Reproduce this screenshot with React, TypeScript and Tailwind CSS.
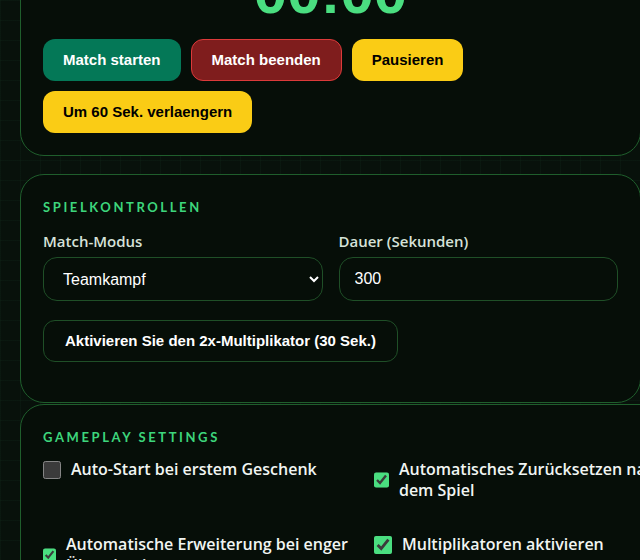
import { useState } from "react"

const headingFont = "font-['Century_Gothic','Lato','Open_Sans',sans-serif]"
const labelFont = "font-['Century_Gothic','Open_Sans','Lato',sans-serif]"
const bodyFont = "font-['Liberation_Sans',Arial,sans-serif]"

function SectionTitle({ children }: { children: string }) {
  return (
    <h2 className={`${headingFont} text-[13px] font-bold uppercase leading-[20px] tracking-[0.2em] text-[#3dd67c]`}>
      {children}
    </h2>
  )
}

function Toggle({ label, defaultChecked }: { label: string; defaultChecked?: boolean }) {
  const [checked, setChecked] = useState(!!defaultChecked)
  return (
    <label className="flex items-center gap-[10px]">
      <input
        type="checkbox"
        checked={checked}
        onChange={(e) => setChecked(e.target.checked)}
        className="h-[18px] w-[18px] accent-[#4ade80] [color-scheme:dark]"
      />
      <span className={`${labelFont} text-[16px] font-semibold leading-[21px] text-[#f1f5f2]`}>{label}</span>
    </label>
  )
}

export default function App() {
  const [mode, setMode] = useState("team")
  const [duration, setDuration] = useState("300")

  return (
    <div className="min-h-screen overflow-hidden bg-[#08110b] bg-[linear-gradient(rgba(74,222,128,0.035)_1px,transparent_1px),linear-gradient(90deg,rgba(74,222,128,0.035)_1px,transparent_1px)] bg-[size:20px_20px] pl-[20px] [color-scheme:dark]">
      {/* Timer + match actions */}
      <section className="mt-[-60px] w-[621px] rounded-[24px] border border-[#1f5e2c] bg-[#060e08] p-[22px]">
        <div className={`${bodyFont} mb-4 text-center text-[60px] font-bold leading-none text-[#4ade80]`}>00:00</div>
        <div className={`${bodyFont} flex flex-wrap gap-[10px] text-[15px] font-bold`}>
          <button className="h-[42px] rounded-[12px] bg-[#047857] px-5 text-white">Match starten</button>
          <button className="h-[42px] rounded-[12px] border border-[#dc3a3a] bg-[#7f1d1d] px-5 text-white">
            Match beenden
          </button>
          <button className="h-[42px] rounded-[12px] bg-[#facc15] px-5 text-black">Pausieren</button>
          <button className="h-[42px] rounded-[12px] bg-[#facc15] px-5 text-black">Um 60 Sek. verlaengern</button>
        </div>
      </section>

      {/* Game controls */}
      <section className="mt-[18px] w-[621px] rounded-[24px] border border-[#1f5e2c] bg-[#060e08] p-[22px] pb-[40px]">
        <SectionTitle>Spielkontrollen</SectionTitle>
        <div className="mt-[14px] grid grid-cols-2 gap-4">
          <div>
            <div className={`${labelFont} mb-[6px] text-[15px] font-semibold leading-[20px] text-[#d6e2d9]`}>
              Match-Modus
            </div>
            <select
              value={mode}
              onChange={(e) => setMode(e.target.value)}
              className={`${bodyFont} h-[44px] w-full rounded-[14px] border border-[#1f4f27] bg-[#060e08] px-[15px] text-[16px] text-white`}
            >
              <option value="team">Teamkampf</option>
              <option value="solo">Einzelkampf</option>
            </select>
          </div>
          <div>
            <div className={`${labelFont} mb-[6px] text-[15px] font-semibold leading-[20px] text-[#d6e2d9]`}>
              Dauer (Sekunden)
            </div>
            <input
              value={duration}
              onChange={(e) => setDuration(e.target.value)}
              className={`${bodyFont} h-[44px] w-full rounded-[14px] border border-[#1f4f27] bg-[#060e08] px-[15px] text-[16px] text-white outline-none`}
            />
          </div>
        </div>
        <button
          className={`${bodyFont} mt-[19px] h-[42px] rounded-[12px] border border-[#1f4f27] px-[21px] text-[15px] font-bold text-white`}
        >
          Aktivieren Sie den 2x-Multiplikator (30 Sek.)
        </button>
      </section>

      {/* Gameplay settings */}
      <section className="mt-[1px] w-[688px] rounded-[24px] border border-[#1f5e2c] bg-[#060e08] p-[22px]">
        <SectionTitle>Gameplay Settings</SectionTitle>
        <div className="mt-[12px] grid grid-cols-2 items-start gap-x-5 gap-y-[33px]">
          <Toggle label="Auto-Start bei erstem Geschenk" />
          <Toggle label="Automatisches Zurücksetzen nach dem Spiel" defaultChecked />
          <Toggle label="Automatische Erweiterung bei enger Übereinstimmung" defaultChecked />
          <Toggle label="Multiplikatoren aktivieren" defaultChecked />
        </div>
      </section>
    </div>
  )
}
